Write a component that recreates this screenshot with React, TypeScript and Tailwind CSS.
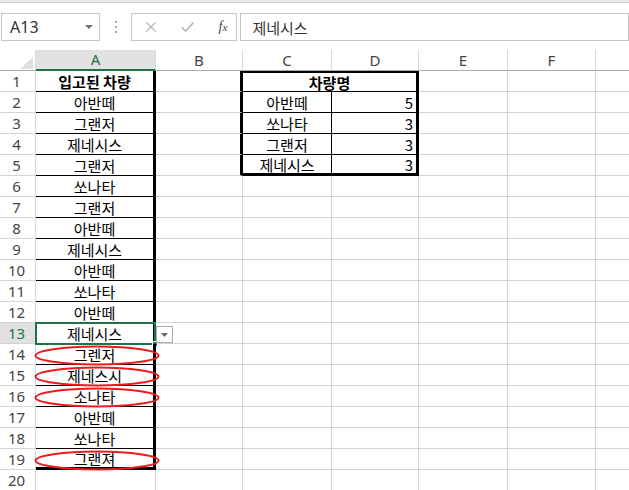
import React from "react";

const KR = "font-['Noto_Sans_CJK_KR',sans-serif]";
const UI = "font-['Noto_Sans',sans-serif]";

const colA = [
  "입고된 차량",
  "아반떼",
  "그랜저",
  "제네시스",
  "그랜저",
  "쏘나타",
  "그랜저",
  "아반떼",
  "제네시스",
  "아반떼",
  "쏘나타",
  "아반떼",
  "제네시스",
  "그렌저",
  "제네스시",
  "소나타",
  "아반떼",
  "쏘나타",
  "그랜져",
  "",
];

const summary = [
  { name: "아반떼", count: 5 },
  { name: "쏘나타", count: 3 },
  { name: "그랜저", count: 3 },
  { name: "제네시스", count: 3 },
];

// rows whose entry is misspelt get a red ring drawn over them
const circled = [14, 15, 16, 19];

function Ellipse() {
  return (
    <svg
      className="pointer-events-none absolute -left-[2px] top-[2px] overflow-visible"
      width="126"
      height="20"
      viewBox="0 0 126 20"
    >
      <ellipse cx="63" cy="9.5" rx="61.5" ry="9" fill="none" stroke="#ec1c1c" strokeWidth="2" />
    </svg>
  );
}

function FormulaBar() {
  return (
    <div className="flex h-[28px] items-stretch">
      <div className="ml-[1px] flex w-[102px] items-center justify-between border border-[#c6c6c6] pl-[8px] pr-[6px]">
        <span className={`${UI} text-[16px] leading-none text-[#333]`}>A13</span>
        <svg width="8" height="4" viewBox="0 0 8 4">
          <path d="M0 0h8L4 4z" fill="#707070" />
        </svg>
      </div>
      <div className="flex w-[31px] flex-col items-center justify-center gap-[3px]">
        <span className="size-[2px] bg-[#a6a6a6]" />
        <span className="size-[2px] bg-[#a6a6a6]" />
        <span className="size-[2px] bg-[#a6a6a6]" />
      </div>
      <div className="flex w-[110px] items-center border border-[#c6c6c6]">
        <svg className="ml-[14px]" width="10" height="10" viewBox="0 0 10 10">
          <path d="M0.5 0.5l9 9M9.5 0.5l-9 9" stroke="#b4b4b4" strokeWidth="1.2" />
        </svg>
        <svg className="ml-[25px]" width="13" height="10" viewBox="0 0 13 10">
          <path d="M0.8 5.2l3.8 3.8 7.8-8.4" fill="none" stroke="#b4b4b4" strokeWidth="1.6" />
        </svg>
        <span className="ml-[25px] font-['Liberation_Serif',serif] text-[14px] italic leading-none text-[#444]">
          f<span className="text-[11px]">x</span>
        </span>
      </div>
      <div className="ml-[3px] flex w-[400px] items-center border border-[#c6c6c6] pl-[11px]">
        <span className={`${KR} text-[15px] leading-none text-[#333]`}>제네시스</span>
      </div>
    </div>
  );
}

function HeaderRow() {
  const head = "flex h-full items-center justify-center border-r border-r-[#dadada] border-b border-b-[#ababab]";
  return (
    <div className={`flex h-[21px] ${UI} text-[15px] leading-none text-[#444]`}>
      <div className="relative h-full w-[36px] border-r border-r-[#dadada] border-b border-b-[#ababab]">
        <svg className="absolute bottom-[1px] right-[2px]" width="13" height="12" viewBox="0 0 13 12">
          <path d="M13 0V12H0z" fill="#dfdfdf" />
        </svg>
      </div>
      <div className="flex h-full w-[120px] items-center justify-center border-r border-r-[#dadada] border-b-2 border-b-[#217346] bg-[#e1e1e1] text-[#217346]">
        A
      </div>
      <div className={`${head} w-[87px]`}>B</div>
      <div className={`${head} w-[89px]`}>C</div>
      <div className={`${head} w-[87px]`}>D</div>
      <div className={`${head} w-[89px]`}>E</div>
      <div className={`${head} w-[88px]`}>F</div>
      <div className="h-full flex-1 border-b border-b-[#ababab]" />
    </div>
  );
}

function SheetRow({ r }: { r: number }) {
  const grid = "border-r border-r-[#d4d4d4] border-b border-b-[#d4d4d4]";
  const selected = r === 13;

  let aBorder = grid;
  if (r < 19) aBorder = "border-r-[3px] border-r-black border-b border-b-black";
  if (r === 19) aBorder = "border-r-[3px] border-r-black border-b-[3px] border-b-black";

  const bBorder =
    r <= 5
      ? "border-r-[3px] border-r-black border-b border-b-[#d4d4d4]"
      : grid;

  const item = summary[r - 2];
  const tblBottom = r === 5 ? "border-b-[3px] border-b-black" : "border-b border-b-black";

  return (
    <div className={`flex h-[21px] ${KR} text-[15px] leading-none text-black`}>
      <div
        className={`flex h-full w-[36px] items-center justify-center pr-[2px] ${UI} text-[15px] text-[#444] border-r border-r-[#d4d4d4] border-b border-b-[#d4d4d4] ${
          selected ? "bg-[#e1e1e1] text-[#217346]" : ""
        }`}
      >
        {r}
      </div>

      <div className={`relative flex h-full w-[120px] items-center justify-center ${aBorder} ${r === 1 ? "font-bold" : ""}`}>
        {colA[r - 1]}
        {circled.includes(r) && <Ellipse />}
        {selected && (
          <>
            <div className="pointer-events-none absolute -left-[1px] -top-[1px] h-[23px] w-[121px] border-2 border-[#217346]" />
            <div className="absolute left-[116px] top-[18px] size-[6px] border border-white bg-[#217346]" />
            <div className="absolute left-[120px] top-[3px] flex h-[17px] w-[17px] items-center justify-center border border-[#ababab] bg-white">
              <svg width="7" height="4" viewBox="0 0 7 4">
                <path d="M0 0h7L3.5 4z" fill="#666" />
              </svg>
            </div>
          </>
        )}
      </div>

      <div className={`h-full w-[87px] ${bBorder}`} />

      {r === 1 ? (
        <div className="flex h-full w-[176px] items-center justify-center border-t-2 border-t-black border-r-[3px] border-r-black border-b border-b-black font-bold">
          차량명
        </div>
      ) : item ? (
        <>
          <div className={`flex h-full w-[89px] items-center justify-center border-r border-r-black ${tblBottom}`}>
            {item.name}
          </div>
          <div className={`flex h-full w-[87px] items-center justify-end pr-[3px] border-r-[3px] border-r-black ${tblBottom}`}>
            {item.count}
          </div>
        </>
      ) : (
        <>
          <div className={`h-full w-[89px] ${grid}`} />
          <div className={`h-full w-[87px] ${grid}`} />
        </>
      )}

      <div className={`h-full w-[89px] ${grid}`} />
      <div className={`h-full w-[88px] ${grid}`} />
      <div className="h-full flex-1 border-b border-b-[#d4d4d4]" />
    </div>
  );
}

export default function App() {
  const rows = Array.from({ length: 20 }, (_, i) => i + 1);
  return (
    <div className="h-[490px] w-[629px] overflow-hidden bg-white">
      <div className="h-[3px] border-b border-b-[#d0d0d0] bg-[#e8e8e8]" />
      <div className="mt-[10px]">
        <FormulaBar />
      </div>
      <div className="mt-[9px]">
        <HeaderRow />
        {rows.map((r) => (
          <SheetRow key={r} r={r} />
        ))}
      </div>
    </div>
  );
}
